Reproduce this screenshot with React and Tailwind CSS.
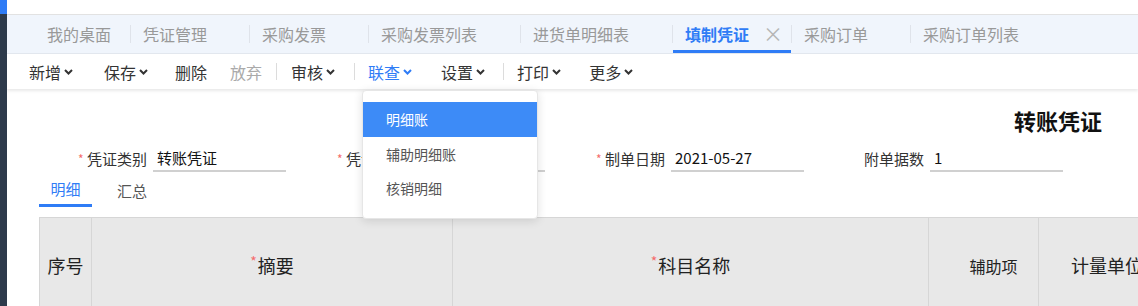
import React from 'react';

const font = { fontFamily: '"Noto Sans CJK SC", "Liberation Sans", sans-serif' };

const Chevron = ({ className = '' }) => (
  <svg width="9" height="6" viewBox="0 0 9 6" className={className}>
    <path d="M1 1l3.5 3.5L8 1" fill="none" stroke="currentColor" strokeWidth="2" />
  </svg>
);

const tabs = [
  { label: '我的桌面', w: 'w-[123px] pl-[40px]' },
  { label: '凭证管理', w: 'w-[118px] pl-[12px]' },
  { label: '采购发票', w: 'w-[118px] pl-[12px]' },
  { label: '采购发票列表', w: 'w-[151px] pl-[12px]' },
  { label: '进货单明细表', w: 'w-[151px] pl-[12px]' },
  { label: '填制凭证', w: 'w-[118px] pl-[12px]', active: true },
  { label: '采购订单', w: 'w-[118px] pl-[12px]' },
  { label: '采购订单列表', w: 'w-[151px] pl-[12px]' },
];

const TabBar = () => (
  <div className="h-[39px] shrink-0 bg-[#f0f5fc] border-b border-[#e3e8ef] flex items-center">
    {tabs.map((t, i) => (
      <React.Fragment key={t.label}>
        {i > 0 && <span className="w-px h-[18px] shrink-0 bg-[#dfe3ea]" />}
        <div
          className={`${t.w} shrink-0 h-full flex items-center text-[16px] ${
            t.active
              ? 'text-[#2f7cf6] font-bold border-b-[3px] border-[#2f7cf6] pt-[3px]'
              : 'text-[#999]'
          }`}
        >
          <span className="leading-[20px]">{t.label}</span>
          {t.active && <span className="ml-[14px] text-[#b5b5b5] font-normal text-[20px] leading-[20px]">×</span>}
        </div>
      </React.Fragment>
    ))}
  </div>
);

const tools = [
  { label: '新增', ml: 'ml-[22px]', chev: true },
  { label: '保存', ml: 'ml-[31px]', chev: true },
  { label: '删除', ml: 'ml-[27px]' },
  { label: '放弃', ml: 'ml-[23px]', dim: true },
  { sep: true, ml: 'ml-[14px]' },
  { label: '审核', ml: 'ml-[14px]', chev: true },
  { sep: true, ml: 'ml-[19px]' },
  { label: '联查', ml: 'ml-[13px]', chev: true, blue: true },
  { label: '设置', ml: 'ml-[29px]', chev: true },
  { sep: true, ml: 'ml-[18px]' },
  { label: '打印', ml: 'ml-[13px]', chev: true },
  { label: '更多', ml: 'ml-[28px]', chev: true },
];

const Toolbar = () => (
  <div className="h-[35px] shrink-0 bg-white flex items-center relative z-10 shadow-[0_2px_3px_rgba(0,0,0,0.09)]">
    {tools.map((t, i) =>
      t.sep ? (
        <span key={i} className={`${t.ml} w-px h-[17px] bg-[#dcdcdc]`} />
      ) : (
        <div
          key={i}
          className={`${t.ml} flex items-center text-[16px] leading-[20px] ${
            t.blue ? 'text-[#2f7cf6]' : t.dim ? 'text-[#aaa]' : 'text-[#333]'
          }`}
        >
          <span>{t.label}</span>
          {t.chev && <Chevron className="ml-[3px]" />}
        </div>
      )
    )}
  </div>
);

const Field = ({ star = true, label, value }) => (
  <div className="w-[259px] shrink-0 flex items-center">
    <span className="w-[9px] text-[#f56c6c] text-[12px] leading-[12px]">{star ? '*' : ''}</span>
    <span className="w-[66px] text-[15px] text-[#333] leading-[20px]">{label}</span>
    <div className="w-[133px] h-[27px] border-b-2 border-[#d0d0d0] pl-[4px] flex items-center text-[15px] text-[#111] leading-[20px]">
      {value}
    </div>
  </div>
);

const Dropdown = () => (
  <div className="absolute left-[362px] top-[90px] w-[176px] h-[129px] bg-white rounded-[4px] border border-[#e6e6e6] shadow-[0_2px_10px_rgba(0,0,0,0.12)] pt-[11px] z-20">
    {['明细账', '辅助明细账', '核销明细'].map((m, i) => (
      <div
        key={m}
        className={`flex items-center pl-[23px] text-[14px] ${
          i === 0 ? 'bg-[#3d8bf7] text-white h-[35px]' : 'text-[#555] h-[34px]'
        }`}
      >
        {m}
      </div>
    ))}
  </div>
);

const cols = [
  { label: '序号', w: 'w-[52px]', cls: 'justify-center text-[18px]' },
  { label: '摘要', w: 'w-[361px]', star: true, cls: 'justify-center text-[18px]' },
  { label: '科目名称', w: 'w-[476px]', star: true, cls: 'justify-center text-[18px]' },
  { label: '辅助项', w: 'w-[110px]', cls: 'justify-center pl-[20px] text-[16px]' },
  { label: '计量单位', w: 'w-[110px]', cls: 'pl-[32px] text-[18px] whitespace-nowrap' },
];

export default function App() {
  return (
    <div className="w-[1138px] h-[306px] overflow-hidden flex bg-white relative" style={font}>
      <div className="w-[7px] shrink-0 flex flex-col">
        <div className="h-[14px] bg-[#2f7cf6]" />
        <div className="flex-1 bg-[#2d3a4b]" />
      </div>
      <div className="flex-1 min-w-0 flex flex-col overflow-hidden">
        <div className="h-[15px] shrink-0 bg-white border-b border-[#e2e2e2]" />
        <TabBar />
        <Toolbar />
        <div className="flex flex-col shrink-0 pl-[32px]">
          <div className="h-[46px] shrink-0 flex items-end justify-end pr-[36px]">
            <span className="text-[22px] font-bold text-[#111] leading-[30px]">转账凭证</span>
          </div>
          <div className="flex shrink-0 ml-[39px] mt-[10px]">
            <Field label="凭证类别" value="转账凭证" />
            <Field label="凭证号" value="" />
            <Field label="制单日期" value="2021-05-27" />
            <Field star={false} label="附单据数" value="1" />
          </div>
          <div className="flex shrink-0 h-[35px]">
            <div className="w-[53px] flex items-center justify-center text-[15px] text-[#2f7cf6] border-b-[3px] border-[#2f7cf6] pt-[3px]">
              明细
            </div>
            <div className="w-[80px] flex items-center justify-center text-[15px] text-[#555] pt-[3px]">汇总</div>
          </div>
          <div className="mt-[10px] shrink-0 flex h-[96px] bg-[#e8e8e8] border-t border-l border-[#d6d6d6]">
            {cols.map((c) => (
              <div
                key={c.label}
                className={`${c.w} ${c.cls} shrink-0 border-r border-[#d6d6d6] flex items-center text-[#222]`}
              >
                {c.star && <span className="text-[#f56c6c] text-[14px] self-center -mt-[8px] mr-[1px]">*</span>}
                {c.label}
              </div>
            ))}
          </div>
        </div>
      </div>
      <Dropdown />
    </div>
  );
}
